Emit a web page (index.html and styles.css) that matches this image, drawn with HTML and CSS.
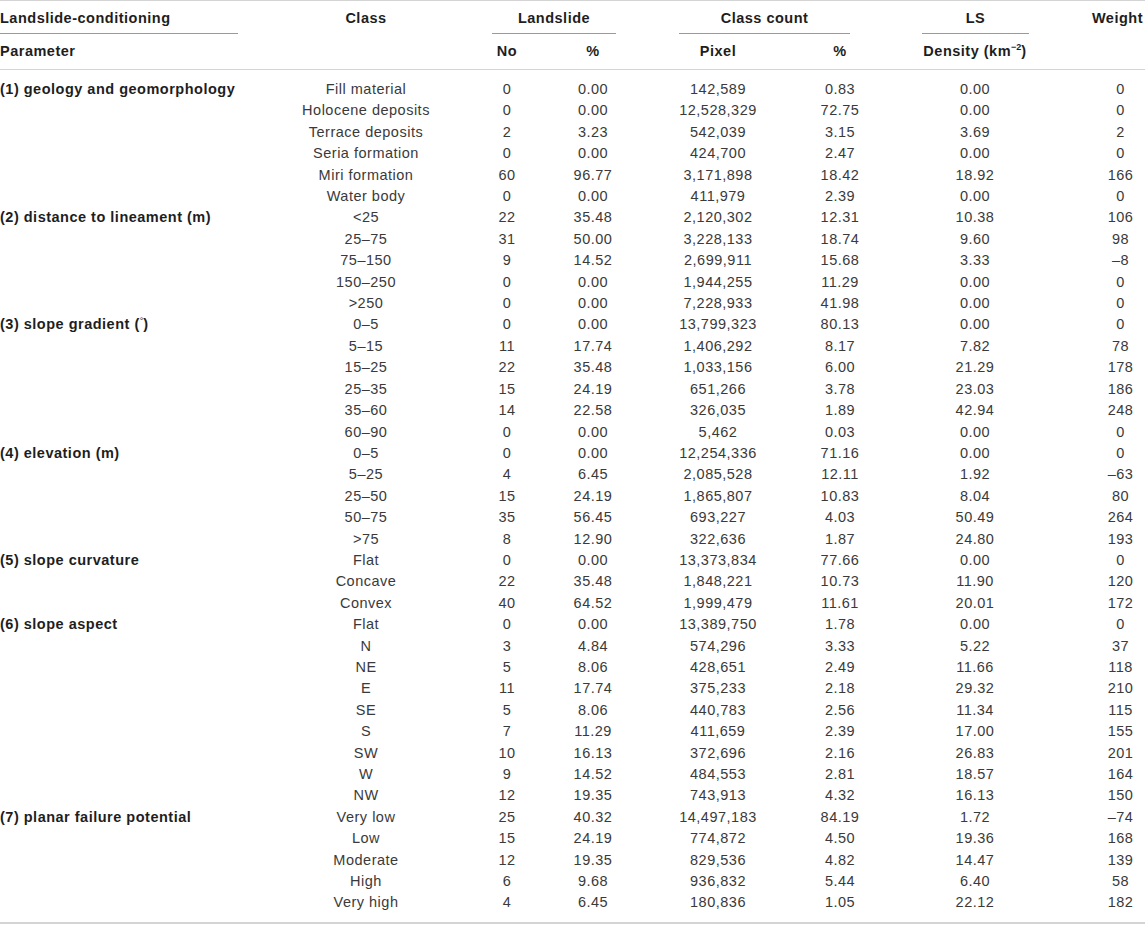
FILE: index.html
```html
<!DOCTYPE html>
<html lang="en">
<head>
  <meta charset="UTF-8">
  <title>Landslide-conditioning parameters</title>
  <link rel="stylesheet" href="styles.css">
</head>
<body>

  <table class="ls-table">
    <colgroup>
      <col class="c-param">
      <col class="c-class">
      <col class="c-no">
      <col class="c-pct">
      <col class="c-pixel">
      <col class="c-pct2">
      <col class="c-density">
      <col class="c-weight">
    </colgroup>
    <thead>
      <tr class="head-top">
        <th class="param"><div class="rule rule-param">Landslide-conditioning</div></th>
        <th><div class="rule rule-none">Class</div></th>
        <th colspan="2"><div class="rule rule-landslide">Landslide</div></th>
        <th colspan="2"><div class="rule rule-count">Class count</div></th>
        <th><div class="rule rule-ls">LS</div></th>
        <th class="weight-head"><div class="rule rule-none">Weight</div></th>
      </tr>
      <tr class="head-sub">
        <th class="param">Parameter</th>
        <th></th>
        <th>No</th>
        <th>%</th>
        <th>Pixel</th>
        <th>%</th>
        <th>Density (km<sup>−2</sup>)</th>
        <th></th>
      </tr>
    </thead>
    <tbody>
      <tr class="first"><td class="param">(1) geology and geomorphology</td><td>Fill material</td><td>0</td><td>0.00</td><td>142,589</td><td>0.83</td><td>0.00</td><td class="weight">0</td></tr>
      <tr><td class="param"></td><td>Holocene deposits</td><td>0</td><td>0.00</td><td>12,528,329</td><td>72.75</td><td>0.00</td><td class="weight">0</td></tr>
      <tr><td class="param"></td><td>Terrace deposits</td><td>2</td><td>3.23</td><td>542,039</td><td>3.15</td><td>3.69</td><td class="weight">2</td></tr>
      <tr><td class="param"></td><td>Seria formation</td><td>0</td><td>0.00</td><td>424,700</td><td>2.47</td><td>0.00</td><td class="weight">0</td></tr>
      <tr><td class="param"></td><td>Miri formation</td><td>60</td><td>96.77</td><td>3,171,898</td><td>18.42</td><td>18.92</td><td class="weight">166</td></tr>
      <tr><td class="param"></td><td>Water body</td><td>0</td><td>0.00</td><td>411,979</td><td>2.39</td><td>0.00</td><td class="weight">0</td></tr>

      <tr><td class="param">(2) distance to lineament (m)</td><td>&lt;25</td><td>22</td><td>35.48</td><td>2,120,302</td><td>12.31</td><td>10.38</td><td class="weight">106</td></tr>
      <tr><td class="param"></td><td>25–75</td><td>31</td><td>50.00</td><td>3,228,133</td><td>18.74</td><td>9.60</td><td class="weight">98</td></tr>
      <tr><td class="param"></td><td>75–150</td><td>9</td><td>14.52</td><td>2,699,911</td><td>15.68</td><td>3.33</td><td class="weight">–8</td></tr>
      <tr><td class="param"></td><td>150–250</td><td>0</td><td>0.00</td><td>1,944,255</td><td>11.29</td><td>0.00</td><td class="weight">0</td></tr>
      <tr><td class="param"></td><td>&gt;250</td><td>0</td><td>0.00</td><td>7,228,933</td><td>41.98</td><td>0.00</td><td class="weight">0</td></tr>

      <tr><td class="param">(3) slope gradient (<sup class="deg">°</sup>)</td><td>0–5</td><td>0</td><td>0.00</td><td>13,799,323</td><td>80.13</td><td>0.00</td><td class="weight">0</td></tr>
      <tr><td class="param"></td><td>5–15</td><td>11</td><td>17.74</td><td>1,406,292</td><td>8.17</td><td>7.82</td><td class="weight">78</td></tr>
      <tr><td class="param"></td><td>15–25</td><td>22</td><td>35.48</td><td>1,033,156</td><td>6.00</td><td>21.29</td><td class="weight">178</td></tr>
      <tr><td class="param"></td><td>25–35</td><td>15</td><td>24.19</td><td>651,266</td><td>3.78</td><td>23.03</td><td class="weight">186</td></tr>
      <tr><td class="param"></td><td>35–60</td><td>14</td><td>22.58</td><td>326,035</td><td>1.89</td><td>42.94</td><td class="weight">248</td></tr>
      <tr><td class="param"></td><td>60–90</td><td>0</td><td>0.00</td><td>5,462</td><td>0.03</td><td>0.00</td><td class="weight">0</td></tr>

      <tr><td class="param">(4) elevation (m)</td><td>0–5</td><td>0</td><td>0.00</td><td>12,254,336</td><td>71.16</td><td>0.00</td><td class="weight">0</td></tr>
      <tr><td class="param"></td><td>5–25</td><td>4</td><td>6.45</td><td>2,085,528</td><td>12.11</td><td>1.92</td><td class="weight">–63</td></tr>
      <tr><td class="param"></td><td>25–50</td><td>15</td><td>24.19</td><td>1,865,807</td><td>10.83</td><td>8.04</td><td class="weight">80</td></tr>
      <tr><td class="param"></td><td>50–75</td><td>35</td><td>56.45</td><td>693,227</td><td>4.03</td><td>50.49</td><td class="weight">264</td></tr>
      <tr><td class="param"></td><td>&gt;75</td><td>8</td><td>12.90</td><td>322,636</td><td>1.87</td><td>24.80</td><td class="weight">193</td></tr>

      <tr><td class="param">(5) slope curvature</td><td>Flat</td><td>0</td><td>0.00</td><td>13,373,834</td><td>77.66</td><td>0.00</td><td class="weight">0</td></tr>
      <tr><td class="param"></td><td>Concave</td><td>22</td><td>35.48</td><td>1,848,221</td><td>10.73</td><td>11.90</td><td class="weight">120</td></tr>
      <tr><td class="param"></td><td>Convex</td><td>40</td><td>64.52</td><td>1,999,479</td><td>11.61</td><td>20.01</td><td class="weight">172</td></tr>

      <tr><td class="param">(6) slope aspect</td><td>Flat</td><td>0</td><td>0.00</td><td>13,389,750</td><td>1.78</td><td>0.00</td><td class="weight">0</td></tr>
      <tr><td class="param"></td><td>N</td><td>3</td><td>4.84</td><td>574,296</td><td>3.33</td><td>5.22</td><td class="weight">37</td></tr>
      <tr><td class="param"></td><td>NE</td><td>5</td><td>8.06</td><td>428,651</td><td>2.49</td><td>11.66</td><td class="weight">118</td></tr>
      <tr><td class="param"></td><td>E</td><td>11</td><td>17.74</td><td>375,233</td><td>2.18</td><td>29.32</td><td class="weight">210</td></tr>
      <tr><td class="param"></td><td>SE</td><td>5</td><td>8.06</td><td>440,783</td><td>2.56</td><td>11.34</td><td class="weight">115</td></tr>
      <tr><td class="param"></td><td>S</td><td>7</td><td>11.29</td><td>411,659</td><td>2.39</td><td>17.00</td><td class="weight">155</td></tr>
      <tr><td class="param"></td><td>SW</td><td>10</td><td>16.13</td><td>372,696</td><td>2.16</td><td>26.83</td><td class="weight">201</td></tr>
      <tr><td class="param"></td><td>W</td><td>9</td><td>14.52</td><td>484,553</td><td>2.81</td><td>18.57</td><td class="weight">164</td></tr>
      <tr><td class="param"></td><td>NW</td><td>12</td><td>19.35</td><td>743,913</td><td>4.32</td><td>16.13</td><td class="weight">150</td></tr>

      <tr><td class="param">(7) planar failure potential</td><td>Very low</td><td>25</td><td>40.32</td><td>14,497,183</td><td>84.19</td><td>1.72</td><td class="weight">–74</td></tr>
      <tr><td class="param"></td><td>Low</td><td>15</td><td>24.19</td><td>774,872</td><td>4.50</td><td>19.36</td><td class="weight">168</td></tr>
      <tr><td class="param"></td><td>Moderate</td><td>12</td><td>19.35</td><td>829,536</td><td>4.82</td><td>14.47</td><td class="weight">139</td></tr>
      <tr><td class="param"></td><td>High</td><td>6</td><td>9.68</td><td>936,832</td><td>5.44</td><td>6.40</td><td class="weight">58</td></tr>
      <tr class="last"><td class="param"></td><td>Very high</td><td>4</td><td>6.45</td><td>180,836</td><td>1.05</td><td>22.12</td><td class="weight">182</td></tr>
    </tbody>
  </table>

</body>
</html>
```

FILE: styles.css
```css
body {
  margin: 0;
  padding: 0;
  background: #fff;
  color: #222;
  font-family: 'Liberation Sans', Arial, Helvetica, sans-serif;
}

.ls-table {
  width: 1145px;
  table-layout: fixed;
  border-collapse: collapse;
  font-size: 14.5px;
  letter-spacing: 0.5px;
  border-top: 1px solid #d4d4d4;
  border-bottom: 2px solid #d4d4d4;
}

/* column widths, centred on the values in the original */
.c-param { width: 250px; }
.c-class { width: 232px; }
.c-no { width: 50px; }
.c-pct { width: 122px; }
.c-pixel { width: 128px; }
.c-pct2 { width: 116px; }
.c-density { width: 154px; }
.c-weight { width: 93px; }

th, td {
  padding: 0;
  text-align: center;
  white-space: nowrap;
}

th {
  font-weight: bold;
  color: #1e1e1e;
}

td {
  font-weight: normal;
  color: #3a3a3a;
  line-height: 21.4px;
}

.param {
  text-align: left;
  font-weight: bold;
  color: #1e1e1e;
}

.weight {
  padding-left: 44px;
}

/* header rows */
.head-top th {
  padding-top: 8px;
}

.rule {
  line-height: 18px;
  padding-bottom: 6px;
  border-bottom: 1px solid #9a9a9a;
}

.rule-none { border-bottom-color: transparent; }
.rule-param { margin-right: 12px; }
.rule-landslide { margin: 0 38px 0 10px; }
.rule-count { margin: 0 48px 0 25px; }
.rule-ls { margin: 0 23px 0 24px; }

.weight-head {
  text-align: right;
  padding-right: 2px;
}

.head-sub th {
  line-height: 18px;
  padding-top: 8px;
  padding-bottom: 9px;
  border-bottom: 1px solid #d4d4d4;
}

sup {
  font-size: 9px;
  line-height: 0;
  vertical-align: 6px;
  letter-spacing: 0;
}

.deg {
  font-weight: normal;
  vertical-align: 5px;
}

tbody tr.first td {
  padding-top: 9px;
}

tbody tr.last td {
  padding-bottom: 8px;
}
```
